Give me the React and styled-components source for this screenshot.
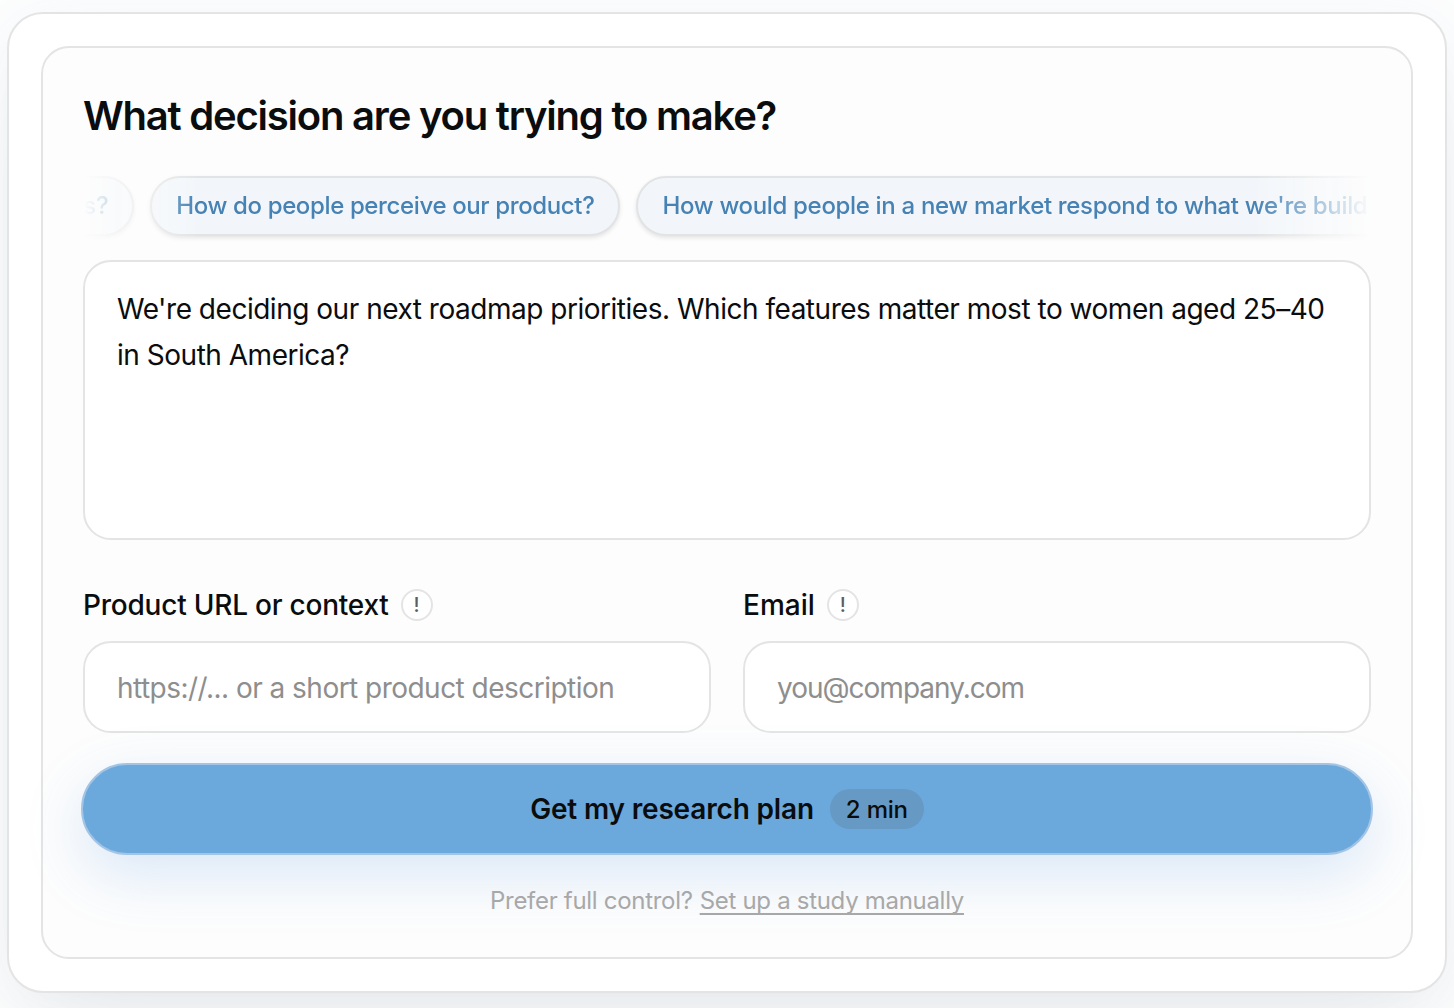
import styled, { createGlobalStyle } from "styled-components"

const suggestions = [
    { text: "How would we reach new customers?", spacing: "-0.35px" },
    { text: "How do people perceive our product?", spacing: "-0.37px" },
    { text: "How would people in a new market respond to what we're building?", spacing: "-0.33px" },
]

export default function App() {
    return (
        <>
            <GlobalStyle />
            <PageStyle>
                <OuterCard>
                    <FormCard>
                        <Title>What decision are you trying to make?</Title>
                        <SuggestionsStrip>
                            <SuggestionsTrack>
                                {suggestions.map((item) => (
                                    <Chip key={item.text} type="button" $spacing={item.spacing}>{item.text}</Chip>
                                ))}
                            </SuggestionsTrack>
                        </SuggestionsStrip>
                        <Question
                            spellCheck={false}
                            defaultValue="We're deciding our next roadmap priorities. Which features matter most to women aged 25–40 in South America?"
                        />
                        <FieldsRow>
                            <Field>
                                <LabelRow>
                                    <Label htmlFor="context" $spacing="-0.22px">Product URL or context</Label>
                                    <Hint>!</Hint>
                                </LabelRow>
                                <Input id="context" $spacing="-0.53px" placeholder="https://... or a short product description" />
                            </Field>
                            <Field>
                                <LabelRow>
                                    <Label htmlFor="email" $spacing="0">Email</Label>
                                    <Hint>!</Hint>
                                </LabelRow>
                                <Input id="email" $spacing="-1px" placeholder="you@company.com" />
                            </Field>
                        </FieldsRow>
                        <SubmitButton type="button">
                            <ButtonText>Get my research plan</ButtonText>
                            <Duration>2 min</Duration>
                        </SubmitButton>
                        <FooterText>
                            <span>Prefer full control?</span>
                            <ManualLink>Set up a study manually</ManualLink>
                        </FooterText>
                    </FormCard>
                </OuterCard>
            </PageStyle>
        </>
    )
}

const GlobalStyle = createGlobalStyle`
    * {
        box-sizing: border-box;
    }
    body {
        margin: 0;
        background-color: #fdfdfd;
        overflow: hidden;
    }
    body, button, input, textarea {
        font-family: Inter, "Liberation Sans", sans-serif;
    }
`

const PageStyle = styled.div`
    height: 1008px;
    padding: 12px 7px 15px;
    overflow: hidden;
`

const OuterCard = styled.div`
    height: 981px;
    padding: 32px;
    background-color: #ffffff;
    border: 2px solid #e4e4e4;
    border-radius: 36px;
    box-shadow: 0 48px 96px -24px rgba(0, 0, 0, 0.07), 0 8px 60px rgba(107, 169, 221, 0.08);
`

const FormCard = styled.div`
    display: flex;
    flex-direction: column;
    height: 913px;
    padding: 40px;
    background-color: #fdfdfd;
    border: 2px solid #e4e4e4;
    border-radius: 28px;
`

const Title = styled.h1`
    margin: 0;
    height: 56px;
    line-height: 56px;
    font-size: 40px;
    font-weight: 600;
    letter-spacing: -1.22px;
    white-space: nowrap;
    color: #0b0c0e;
`

const SuggestionsStrip = styled.div`
    display: flex;
    justify-content: flex-start;
    height: 84px;
    margin-top: 24px;
    padding: 8px 0 16px;
    overflow: hidden;
    mask-image: linear-gradient(to right, transparent, #000 9%, #000 91%, transparent);
`

const SuggestionsTrack = styled.div`
    display: flex;
    gap: 16px;
    margin-left: -423px;
`

const Chip = styled.button`
    flex: none;
    height: 60px;
    padding: 0 24px 2px;
    font-size: 24px;
    font-weight: 500;
    letter-spacing: ${props => props.$spacing};
    white-space: nowrap;
    color: #4682b4;
    background-color: #f2f6fa;
    border: 2px solid #e2e3e4;
    border-radius: 30px;
    box-shadow: 0 2px 4px rgba(0, 0, 0, 0.1);
    cursor: pointer;
`

const Question = styled.textarea`
    display: block;
    flex: none;
    width: 100%;
    height: 280px;
    margin-top: 8px;
    padding: 24px 32px;
    resize: none;
    outline: none;
    overflow: hidden;
    font-size: 28px;
    line-height: 46px;
    letter-spacing: -0.48px;
    color: #0b0c0e;
    background-color: #ffffff;
    border: 2px solid #e4e4e4;
    border-radius: 28px;
`

const FieldsRow = styled.div`
    display: grid;
    grid-template-columns: 1fr 1fr;
    gap: 32px;
    margin-top: 45px;
`

const Field = styled.div`
    display: flex;
    flex-direction: column;
    gap: 16px;
`

const LabelRow = styled.div`
    display: flex;
    align-items: center;
    gap: 12px;
    height: 40px;
`

const Label = styled.label`
    font-size: 28px;
    font-weight: 500;
    letter-spacing: ${props => props.$spacing};
    color: #0b0c0e;
`

const Hint = styled.span`
    display: flex;
    align-items: center;
    justify-content: center;
    width: 32px;
    height: 32px;
    font-size: 20px;
    font-weight: 500;
    color: #5b5d61;
    background-color: #ffffff;
    border: 2px solid #e4e4e4;
    border-radius: 50%;
`

const Input = styled.input`
    width: 100%;
    height: 92px;
    padding: 2px 32px 0;
    outline: none;
    font-size: 28px;
    letter-spacing: ${props => props.$spacing};
    color: #0b0c0e;
    background-color: #ffffff;
    border: 2px solid #e4e4e4;
    border-radius: 28px;
    &::placeholder {
        color: #8e8e8e;
    }
`

const SubmitButton = styled.button`
    display: flex;
    flex: none;
    align-items: center;
    justify-content: center;
    gap: 16px;
    height: 92px;
    margin: 30px -2px 0;
    color: #0b0c0e;
    background-color: #6ba9dd;
    border: 2px solid #a3c4e4;
    border-radius: 46px;
    box-shadow: 0 20px 60px rgba(74, 144, 226, 0.2);
    cursor: pointer;
`

const ButtonText = styled.span`
    font-size: 28px;
    font-weight: 600;
    letter-spacing: -0.17px;
`

const Duration = styled.span`
    display: flex;
    align-items: center;
    height: 40px;
    padding: 0 16px;
    font-size: 24px;
    font-weight: 500;
    letter-spacing: -0.2px;
    background-color: #6699c4;
    border-radius: 20px;
`

const FooterText = styled.p`
    display: flex;
    justify-content: center;
    gap: 7px;
    margin: 32px 0 0;
    line-height: 28px;
    font-size: 24px;
    letter-spacing: -0.3px;
    color: #a8a8a8;
`

const ManualLink = styled.a`
    text-decoration: underline;
    text-decoration-thickness: 2px;
    text-underline-offset: 4px;
    text-decoration-skip-ink: none;
    cursor: pointer;
`
